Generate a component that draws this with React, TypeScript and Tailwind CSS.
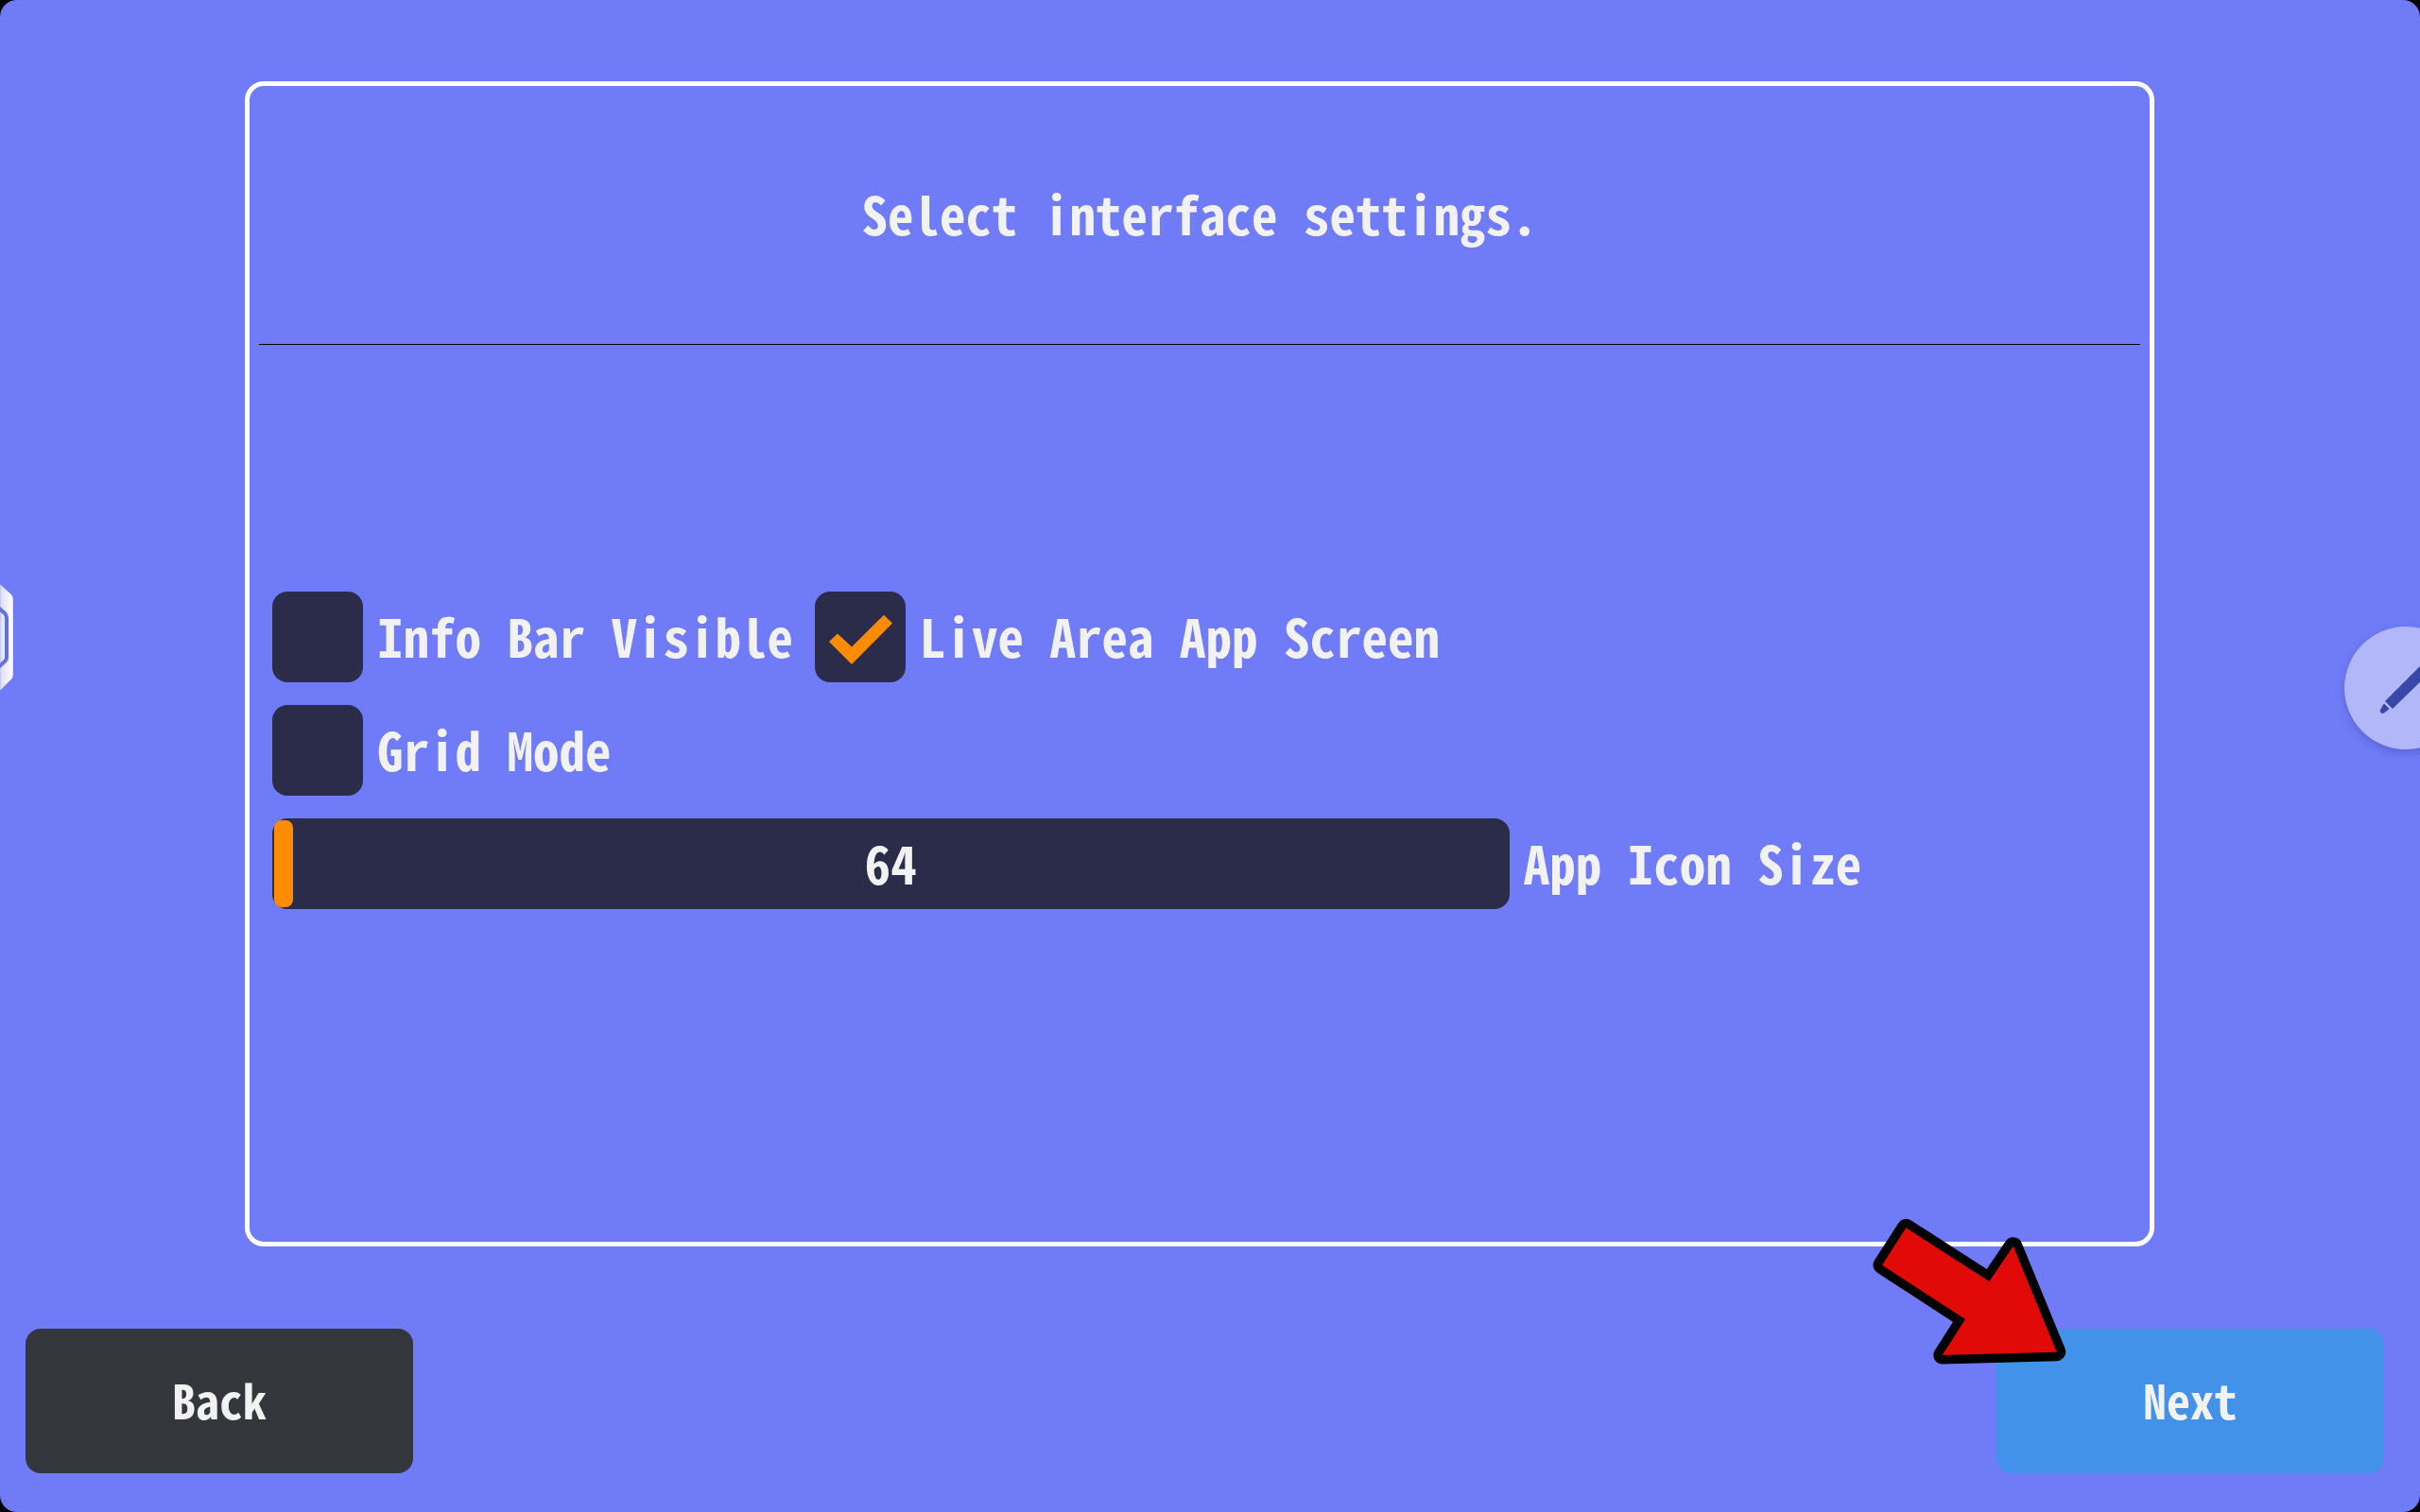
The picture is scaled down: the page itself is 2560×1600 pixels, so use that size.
import React, { useState } from 'react';

interface CheckOptionProps {
  id: string;
  label: string;
  checked: boolean;
  onChange: (checked: boolean) => void;
}

const CheckOption = ({ id, label, checked, onChange }: CheckOptionProps) => (
  <div className="flex items-center gap-[15px]">
    <div className="relative size-24 shrink-0">
      <input
        id={id}
        type="checkbox"
        checked={checked}
        onChange={(e) => onChange(e.target.checked)}
        className="block size-24 appearance-none rounded-2xl bg-[#2b2b4a]"
      />
      {checked && (
        <svg viewBox="0 0 96 96" className="pointer-events-none absolute inset-0 size-24" aria-hidden="true">
          <path d="M15 53L24 44.5L39 58.5L73 24.7L82 33.5L39 77Z" fill="#ff8c00" />
        </svg>
      )}
    </div>
    <label htmlFor={id} className="pb-1 whitespace-nowrap">{label}</label>
  </div>
);

// Pointer that sits over the corner of the Next button
const PointerArrow = () => (
  <svg
    viewBox="0 0 210 160"
    className="pointer-events-none absolute -top-[120px] -left-[132px] h-[160px] w-[210px]"
    aria-hidden="true"
  >
    <path
      d="M36.3 13.3L124.3 70L149.7 32.7L195.7 144.7L74.7 148L99 110L11 52.7Z"
      fill="#000"
      stroke="#000"
      strokeWidth="19"
      strokeLinejoin="round"
    />
    <path d="M36.3 13.3L124.3 70L149.7 32.7L195.7 144.7L74.7 148L99 110L11 52.7Z" fill="#e10a08" />
  </svg>
);

// Half-hidden handle on the left edge
const EdgeHandle = () => (
  <svg viewBox="0 0 20 120" className="absolute top-[614px] left-0 h-[120px] w-5" aria-hidden="true">
    <defs>
      <linearGradient id="handle" x1="0" x2="1" y1="0" y2="0">
        <stop offset="0" stopColor="#dcdefb" />
        <stop offset="1" stopColor="#ffffff" />
      </linearGradient>
    </defs>
    <path d="M0 4L12 15Q14 17 14 20V100Q14 103 12 105L0 117Z" fill="url(#handle)" stroke="#6470d8" strokeOpacity="0.4" />
    <path d="M-2 29L5 35Q7 37 7 40V82Q7 84 5 86L-2 92" fill="none" stroke="#6470dc" strokeWidth="4" />
  </svg>
);

const PenButton = () => (
  <button
    aria-label="Pen tools"
    className="absolute top-[663px] -right-[50px] size-[130px] rounded-full bg-[#b1b7f8] shadow-[0_4px_10px_rgba(50,60,160,0.35)]"
  >
    <svg viewBox="0 0 130 130" className="size-full" aria-hidden="true">
      <path d="M43 79L88 34L97 42L51 87Z" fill="#3848a8" />
      <path d="M42 82L47 87L42 91Q39 93 38 89Z" fill="#3848a8" stroke="#3848a8" strokeWidth="1" strokeLinejoin="round" />
    </svg>
  </button>
);

const App = () => {
  const [infoBar, setInfoBar] = useState(false);
  const [liveArea, setLiveArea] = useState(true);
  const [gridMode, setGridMode] = useState(false);
  const [iconSize, setIconSize] = useState(64);

  return (
    <div className="h-screen bg-black">
      <div className="relative flex h-full flex-col overflow-hidden rounded-[18px] bg-[#707cf7] pt-[86px] pb-[41px] font-['Noto_Sans_Mono_CJK_JP','DejaVu_Sans_Mono',monospace] text-[55px] leading-[64px] font-bold text-[#f2f2f2]">
        <main className="mr-[281px] ml-[259px] flex min-h-0 flex-1 flex-col rounded-[20px] border-[5px] border-white">
          <header className="mx-2.5 flex h-[274px] shrink-0 items-center justify-center border-b border-black pb-1.5">
            <h1>Select interface settings.</h1>
          </header>

          <div className="flex flex-col gap-6 pt-[261px] pr-[23px] pl-6">
            <div className="flex gap-[23px]">
              <CheckOption id="info-bar" label="Info Bar Visible" checked={infoBar} onChange={setInfoBar} />
              <CheckOption id="live-area" label="Live Area App Screen" checked={liveArea} onChange={setLiveArea} />
            </div>
            <CheckOption id="grid-mode" label="Grid Mode" checked={gridMode} onChange={setGridMode} />
            <div className="flex items-center gap-[15px]">
              <div className="relative h-24 w-2/3">
                <input
                  id="icon-size"
                  type="range"
                  min={64}
                  max={512}
                  value={iconSize}
                  onChange={(e) => setIconSize(Number(e.target.value))}
                  className="block h-24 w-full appearance-none rounded-2xl bg-[#2b2b4a] px-0.5 [&::-webkit-slider-thumb]:h-[92px] [&::-webkit-slider-thumb]:w-5 [&::-webkit-slider-thumb]:appearance-none [&::-webkit-slider-thumb]:rounded-lg [&::-webkit-slider-thumb]:bg-[#ff8c00]"
                />
                <span className="pointer-events-none absolute inset-0 flex items-center justify-center pb-1">{iconSize}</span>
              </div>
              <label htmlFor="icon-size" className="pb-1 whitespace-nowrap">App Icon Size</label>
            </div>
          </div>
        </main>

        <footer className="mt-[87px] mr-[38px] ml-[27px] flex justify-between text-[50px]">
          <button className="h-[153px] w-[410px] rounded-2xl bg-[#33363b] pb-1.5">Back</button>
          <div className="relative">
            <button className="h-[153px] w-[410px] rounded-2xl bg-[#4292ea] pb-1.5">Next</button>
            <PointerArrow />
          </div>
        </footer>

        <EdgeHandle />
        <PenButton />
      </div>
    </div>
  );
};

export default App;
